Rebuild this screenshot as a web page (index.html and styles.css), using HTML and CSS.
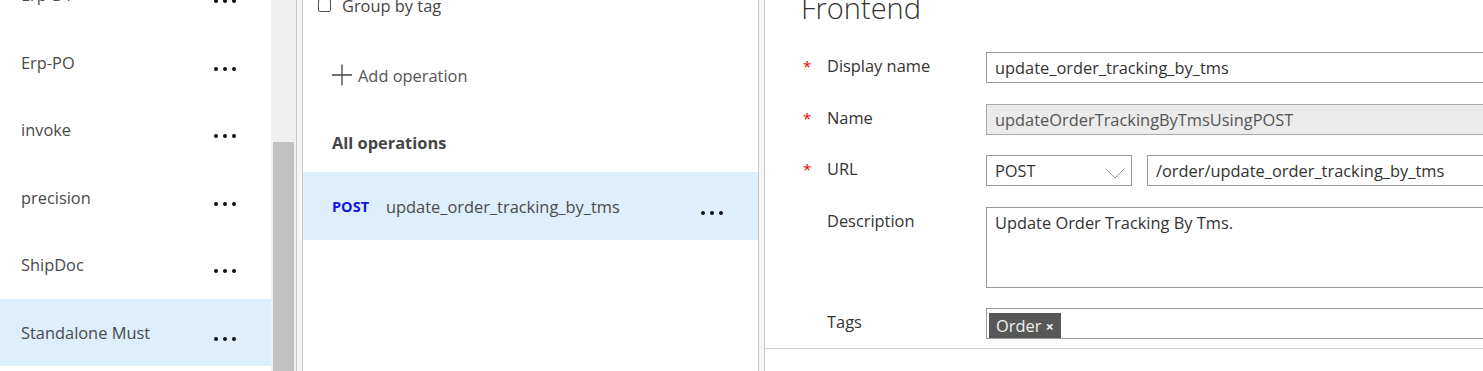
FILE: index.html
```html
<!DOCTYPE html>
<html lang="en">
<head>
    <meta charset="UTF-8">
    <meta name="viewport" content="width=device-width, initial-scale=1.0">
    <title>API operations</title>
    <link rel="stylesheet" href="styles.css">
</head>
<body>
    <div class="layout">
        <div class="tags-panel">
            <div class="api-list">
                <div class="api-list-inner">
                    <div class="api-item"><span class="api-name">Erp-DT</span><span class="dots"><i></i><i></i><i></i></span></div>
                    <div class="api-item"><span class="api-name">Erp-PO</span><span class="dots"><i></i><i></i><i></i></span></div>
                    <div class="api-item"><span class="api-name">invoke</span><span class="dots"><i></i><i></i><i></i></span></div>
                    <div class="api-item"><span class="api-name">precision</span><span class="dots"><i></i><i></i><i></i></span></div>
                    <div class="api-item"><span class="api-name">ShipDoc</span><span class="dots"><i></i><i></i><i></i></span></div>
                    <div class="api-item selected"><span class="api-name">Standalone Must</span><span class="dots"><i></i><i></i><i></i></span></div>
                </div>
            </div>
            <div class="scrollbar">
                <div class="thumb"></div>
            </div>
        </div>

        <div class="ops-panel">
            <label class="group-toggle">
                <span class="checkbox"></span>
                <span>Group by tag</span>
            </label>

            <div class="add-op">
                <svg class="plus" width="20" height="22" viewBox="0 0 20 22">
                    <path d="M10 0.5 V21.5 M0 11 H20" stroke="#444" stroke-width="1.3" fill="none"/>
                </svg>
                <span>Add operation</span>
            </div>

            <div class="all-ops">All operations</div>

            <div class="op-item selected">
                <span class="verb">POST</span>
                <span class="op-name">update_order_tracking_by_tms</span>
                <span class="dots"><i></i><i></i><i></i></span>
            </div>
        </div>

        <div class="editor">
            <h2 class="editor-title">Frontend</h2>

            <div class="form-row">
                <span class="req">*</span>
                <span class="field-label">Display name</span>
                <div class="field">
                    <div class="input">update_order_tracking_by_tms</div>
                </div>
            </div>

            <div class="form-row">
                <span class="req">*</span>
                <span class="field-label">Name</span>
                <div class="field">
                    <div class="input disabled">updateOrderTrackingByTmsUsingPOST</div>
                </div>
            </div>

            <div class="form-row">
                <span class="req">*</span>
                <span class="field-label">URL</span>
                <div class="field url-field">
                    <div class="select">
                        <span>POST</span>
                        <svg class="chevron" width="20" height="11" viewBox="0 0 20 11">
                            <path d="M0.5 0.5 L10 10 L19.5 0.5" stroke="#9a9a9a" stroke-width="1" fill="none"/>
                        </svg>
                    </div>
                    <div class="input url-input">/order/update_order_tracking_by_tms</div>
                </div>
            </div>

            <div class="form-row">
                <span class="req"></span>
                <span class="field-label">Description</span>
                <div class="field">
                    <div class="input textarea">Update Order Tracking By Tms.</div>
                </div>
            </div>

            <div class="form-row">
                <span class="req"></span>
                <span class="field-label">Tags</span>
                <div class="field">
                    <div class="input tag-input">
                        <span class="tag">Order <b>×</b></span>
                    </div>
                </div>
            </div>

            <div class="editor-divider"></div>
        </div>
    </div>
</body>
</html>
```

FILE: styles.css
```css
* {
    box-sizing: border-box;
    margin: 0;
    padding: 0;
}

body {
    font-family: "Open Sans", "Noto Sans", sans-serif;
    font-size: 16.4px;
    color: #444;
    background-color: #f5f5f5;
    overflow: hidden;
}

.layout {
    display: flex;
    height: 371px;
    gap: 5px;
}

/* left column: api list with scrollbar */
.tags-panel {
    display: flex;
    width: 297px;
    flex-shrink: 0;
    background: #fff;
    border-right: 1px solid #c8c8c8;
}

.api-list {
    flex: 1;
    overflow: hidden;
}

.api-list-inner {
    margin-top: -39px;
}

.api-item {
    display: flex;
    align-items: center;
    height: 67.5px;
    padding-left: 21px;
}

.api-item.selected {
    background-color: #ddeefc;
}

.api-name {
    width: 193px;
    color: #4a4a4a;
}

.dots {
    display: flex;
    gap: 5px;
    margin-top: 13px;
}

.dots i {
    display: block;
    width: 4px;
    height: 4px;
    border-radius: 50%;
    background: #111;
}

.scrollbar {
    width: 25px;
    background: #f0f0f0;
    padding: 142px 2px 0 2px;
}

.thumb {
    height: 240px;
    background: #c1c1c1;
}

/* middle column: operations */
.ops-panel {
    width: 457px;
    flex-shrink: 0;
    background: #fff;
    border-left: 1px solid #c8c8c8;
    border-right: 1px solid #c8c8c8;
}

.group-toggle {
    display: flex;
    align-items: center;
    gap: 11px;
    height: 20px;
    margin-top: -5px;
    padding-left: 15px;
    color: #444;
}

.checkbox {
    width: 13px;
    height: 13px;
    border: 1px solid #555;
    border-radius: 2px;
}

.add-op {
    display: flex;
    align-items: center;
    gap: 6px;
    margin-top: 48px;
    padding-left: 29px;
    height: 24px;
    color: #555;
}

.all-ops {
    margin-top: 44px;
    padding-left: 29px;
    font-weight: 700;
    color: #444;
    height: 24px;
    line-height: 24px;
}

.op-item {
    display: flex;
    align-items: center;
    height: 68px;
    margin-top: 17px;
    padding-left: 29px;
}

.op-item.selected {
    background-color: #ddeefc;
}

.verb {
    width: 54px;
    font-size: 14.5px;
    font-weight: 700;
    color: #1515e0;
}

.op-name {
    width: 315px;
    color: #4a4a4a;
}

/* right column: frontend form */
.editor {
    flex: 1;
    background: #fff;
    border-left: 1px solid #c8c8c8;
}

.editor-title {
    font-size: 29px;
    font-weight: 300;
    color: #333;
    margin-top: -12px;
    padding-left: 36px;
    line-height: 40px;
    height: 42px;
}

.form-row {
    display: flex;
    align-items: flex-start;
    margin-top: 22px;
}

.form-row + .form-row {
    margin-top: 20.5px;
}

.req {
    width: 24px;
    padding-left: 38px;
    box-sizing: content-box;
    color: #e00;
    font-size: 15px;
    line-height: 28px;
}

.field-label {
    width: 159px;
    color: #333;
    line-height: 28px;
}

.field {
    display: flex;
    gap: 15px;
}

.input {
    width: 560px;
    height: 31px;
    border: 1px solid #999;
    padding: 0 8px;
    line-height: 29px;
    color: #333;
    white-space: nowrap;
}

.input.disabled {
    background: #ebebeb;
    border-color: #a8a8a8;
    color: #555;
}

.select {
    display: flex;
    align-items: center;
    justify-content: space-between;
    width: 146px;
    height: 31px;
    border: 1px solid #999;
    padding: 0 6px 0 8px;
    color: #333;
}

.chevron {
    margin-top: 6px;
}

.url-input {
    width: 400px;
}

.textarea {
    height: 81px;
}

.tag-input {
    padding: 2px;
}

.tag {
    display: inline-block;
    height: 25px;
    line-height: 25px;
    padding: 0 7px;
    background: #575757;
    color: #f2f2f2;
}

.tag b {
    font-size: 14px;
}

.editor-divider {
    margin-top: 9px;
    border-top: 1px solid #cfcfcf;
}
```
